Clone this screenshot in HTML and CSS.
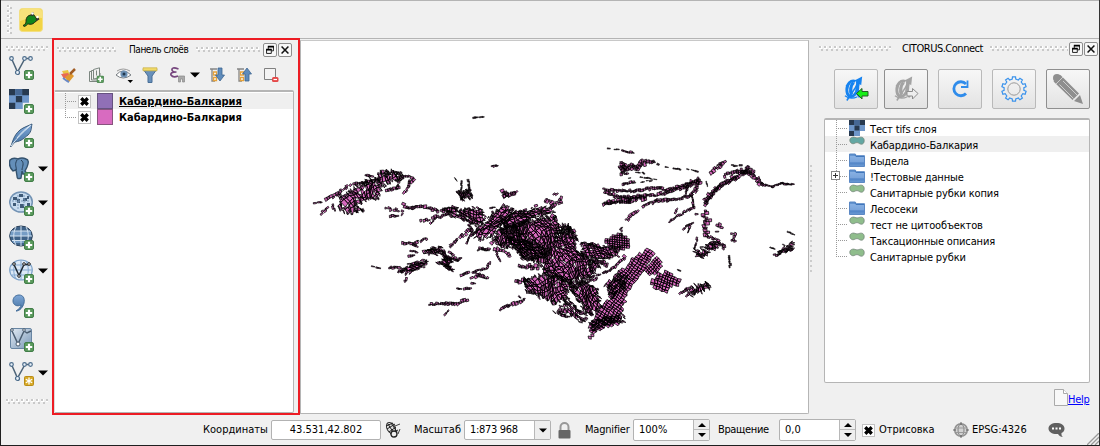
FILE: index.html
```html
<!DOCTYPE html>
<html lang="ru">
<head>
<meta charset="utf-8">
<title>QGIS</title>
<link rel="stylesheet" href="styles.css">
</head>
<body>
<svg class="defs" width="0" height="0">
  <defs>
    <linearGradient id="blue" x1="0" y1="0" x2="0" y2="1"><stop offset="0" stop-color="#7fa8d8"/><stop offset="1" stop-color="#426f9f"/></linearGradient>
    <linearGradient id="pale" x1="0" y1="0" x2="1" y2="1"><stop offset="0" stop-color="#e4edf6"/><stop offset="1" stop-color="#7795b5"/></linearGradient>
    <linearGradient id="folderfill" x1="0" y1="0" x2="0" y2="1"><stop offset="0" stop-color="#8db5e6"/><stop offset=".65" stop-color="#78a3da"/><stop offset=".7" stop-color="#4f83c6"/><stop offset="1" stop-color="#6d9bd4"/></linearGradient>
    <symbol id="plus" viewBox="0 0 10 10"><rect x=".5" y=".5" width="9" height="9" rx="1.5" fill="#5a9a5c" stroke="#417d48"/><path d="M5 1.8v6.4M1.8 5h6.4" stroke="#fff" stroke-width="2.2"/></symbol>
    <symbol id="vee" viewBox="0 0 24 24"><path d="M2.5 3.5 8.5 17 16 3.500H21" fill="none" stroke="#4d6478" stroke-width="1.5"/><g fill="#e9f1f8" stroke="#4d6d8c" stroke-width="1.200"><circle cx="2.500" cy="3.500" r="1.800"/><circle cx="15.500" cy="3.500" r="1.800"/><circle cx="21.500" cy="3.500" r="1.800"/><circle cx="8.500" cy="17.500" r="2"/></g></symbol>
    <symbol id="raster" viewBox="0 0 16 16"><path fill="#6e96c9" d="M0 0h16v11h-5v5H0z"/><path fill="#27394f" d="M0 0h5v5H0zM10.500 0H16v5h-5.500zM5.500 5.500h5v5h-5zM0 11h5v5H0z"/><path fill="#466895" d="M5 0h5.500v5H5z"/></symbol>
    <symbol id="folder" viewBox="0 0 16 14"><path d="M.5 13.500V1h5.800l1 1.700H15.500v10.800z" fill="url(#folderfill)" stroke="#5b88c4"/><path d="M1 2h5l1 1.500h8" fill="none" stroke="#3f76bb"/></symbol>
    <symbol id="poly" viewBox="0 0 16 10"><path d="M3.500 1.200C5.500.7 6.500 1.900 8 1.900S11 .9 12.700 1.200s2.600 1.600 2.500 3.600-1 3.400-2.900 3.400S9.800 6.600 8 6.600 5.500 8 3.700 7.700.8 6 .8 4.300 1.700 1.600 3.500 1.200z" fill="currentColor" stroke="#74877a" stroke-width=".8"/></symbol>
    <symbol id="cross" viewBox="0 0 12 12"><path d="M3 3l6 6M9 3l-6 6" stroke="#000" stroke-width="3"/></symbol>
    <symbol id="float" viewBox="0 0 14 14"><path d="M5 3h6v5H9M5 3v3" fill="none" stroke="#000"/><path d="M4.500 3h7M2.500 6.500h6.500" stroke="#000" stroke-width="2"/><path d="M3 6.500h5.500v4.500H3z" fill="none" stroke="#000"/></symbol>
    <symbol id="close" viewBox="0 0 14 14"><path d="M3 3l8 8M11 3l-8 8" stroke="#111" stroke-width="1.800"/></symbol>
    <symbol id="down" viewBox="0 0 10 6"><path d="M0 .5h10L5 5.500z"/></symbol>
    <symbol id="alpha" viewBox="0 0 24 26"><g fill="none" stroke="currentColor"><path d="M13 5C8 3 4 8 4 14s4 9 8 5 4-10 3-14" stroke-width="3"/><path d="M11 6c-3 3-4 9-2 13" stroke-width="3.400"/><path d="M16 6c-2 5-2 11 2 15" stroke-width="3.600"/><path d="M4 25 18 4" stroke-width="1.600"/><path d="M2 20c4 3 9 3 13 1M3 10l4-3" stroke-width="1.200"/></g><path d="M20 0 19 9 12 4z" fill="currentColor"/></symbol>
  </defs>
</svg>
<div class="window">
  <header class="topbar">
    <span class="grip-v"></span>
    <svg class="plug" width="24" height="24" viewBox="0 0 24 24"><rect x=".5" y=".5" width="23" height="23" rx="3" fill="#f2d445" stroke="#f3df81"/><path d="M1 4q0-3 3-3h16q3 0 3 3v6Q12 8 1 13z" fill="#f8e27b"/><path d="M4 17.500c2-1 3-2 3-4C7 9 9 7.500 12 7l1.500-2 5 7-3 2.500c-2 2-4 2-6 1.500-2 0-2 2-4 2.500z" fill="#12851b" stroke="#222b12"/><path d="M13 8l1-3.500M17 12l3-1.500" stroke="#333" stroke-width="2"/><circle cx="13.500" cy="5.500" r="1.300" fill="#fff"/><circle cx="18.500" cy="9" r="1.200" fill="#fff"/></svg>
  </header>
  <main class="main">
    <nav class="tools">
      <span class="grip"></span>
      <div class="tool"><svg class="ico" viewBox="0 0 25 25"><use href="#vee" width="24" height="24"/><use href="#plus" x="15" y="15" width="10" height="10"/></svg></div>
      <div class="tool"><svg class="ico" viewBox="0 0 25 25"><use href="#raster" width="20" height="20"/><use href="#plus" x="15" y="15" width="10" height="10"/></svg></div>
      <div class="tool"><svg class="ico" viewBox="0 0 25 25"><path d="M1.500 24C4 19 4 13 11 7c4-3 8-4 12-6-1 4 0 7-4 11-4 3-6 6-13 7z" fill="url(#blue)" stroke="#3c5c7c"/><path d="M2 23C7 16 13 10 21 3M8 15C12 10 16 6 22 2" fill="none" stroke="#dce9f5"/><use href="#plus" x="15" y="15" width="10" height="10"/></svg></div>
      <div class="tool"><svg class="ico" viewBox="0 0 25 25"><path d="M1 3q3-3 8-1 4-2 8 0 4 1 1 8l-2 4 2 3h-4l-1-3-1 7q-4 2-4-2l-1-6-3 1Q-1 9 1 3z" fill="#648fb9" stroke="#34526e" stroke-width="1.400"/><path d="M8 3c-3 5 0 7-1 10M12 3c4 3 1 7 1 10" fill="none" stroke="#263f58"/><use href="#plus" x="15" y="15" width="10" height="10"/></svg><svg class="arrow"><use href="#down"/></svg></div>
      <div class="tool"><svg class="ico" viewBox="0 0 25 25"><ellipse cx="12" cy="11" rx="11.300" ry="10" fill="#c8dcef" stroke="#7393b4" stroke-width="1.500"/><path d="M4 6h4v3H4zM10 3h4v3h-4zM8 8h3v4H8zM14 7h4v3h-4zM4 12h3v3H4zM11 13h4v4h-4zM18 12h3v3h-3zM18 5h2v3h-2z" fill="#3f5b78"/><path d="M9 4v14M15 4v12M3 10h18" stroke="#7a9abb" stroke-dasharray="2 1"/><use href="#plus" x="15" y="15" width="10" height="10"/></svg><svg class="arrow"><use href="#down"/></svg></div>
      <div class="tool"><svg class="ico" viewBox="0 0 25 25"><ellipse cx="12" cy="11" rx="11.300" ry="10" fill="#3e6288" stroke="#2a4059"/><path d="M2 6h20v5H1zM3 15h18v3H4z" fill="#769dc5"/><path d="M12 1v20M1 11h22M3 6h18M3 15.500h18M7 2C4 7 4 15 7 20M17 2c3 5 3 13 0 18" fill="none" stroke="#d5e4f2"/><use href="#plus" x="15" y="15" width="10" height="10"/></svg></div>
      <div class="tool"><svg class="ico" viewBox="0 0 25 25"><ellipse cx="12" cy="11" rx="11.300" ry="10" fill="#dce9f6" stroke="#7da2c9" stroke-width="1.200"/><path d="M2 6h20M1 11h22M3 16h18M12 1v20M7 2C4 7 4 15 7 20M17 2c3 5 3 13 0 18" fill="none" stroke="#83a9d0"/><path d="M5 5.500 10 16.500 15 5.500h5" fill="none" stroke="#1e2933" stroke-width="1.500"/><g fill="#fff" stroke="#222"><circle cx="5" cy="5" r="1.300"/><circle cx="15" cy="5" r="1.300"/><circle cx="20" cy="5" r="1.300"/><circle cx="10" cy="17" r="1.300"/></g><use href="#plus" x="15" y="15" width="10" height="10"/></svg><svg class="arrow"><use href="#down"/></svg></div>
      <div class="tool"><svg class="ico" viewBox="0 0 25 25"><path d="M7 18c3-2 5-4 5-6-4 2-8 0-8-4s3-6 6-6c4 0 6 3 5 8-1 4-4 8-8 8z" fill="url(#blue)" stroke="#436d9a"/><use href="#plus" x="15" y="15" width="10" height="10"/></svg></div>
      <div class="tool"><svg class="ico" viewBox="0 0 25 25"><rect x="1.500" y="1.500" width="21" height="20" rx="1.500" fill="url(#pale)" stroke="#6885a2"/><path d="M3 4 9 17l6-13 3 2 4-2" fill="none" stroke="#4a5d70" stroke-width="1.500"/><g fill="#fff" stroke="#4a5d70"><circle cx="3" cy="3" r="1.300"/><circle cx="15" cy="3" r="1.300"/><circle cx="9" cy="17" r="2"/></g><use href="#plus" x="15" y="15" width="10" height="10"/></svg></div>
      <div class="tool"><svg class="ico" viewBox="0 0 25 25"><use href="#vee" width="24" height="24"/><rect x="15.500" y="15.500" width="9" height="9" rx="1" fill="#d8aa27" stroke="#b98c18"/><path d="M20 16.500v7M16.800 18.200l6.400 3.600M23.200 18.200l-6.400 3.600" stroke="#fff" stroke-width="1.300"/></svg><svg class="arrow"><use href="#down"/></svg></div>
      <span class="grip grip-end"></span>
    </nav>

    <section class="layers">
      <div class="title"><span class="grip"></span><span class="name t-panel">Панель слоёв</span><span class="grip g2"></span><span class="tb"><svg><use href="#float"/></svg></span><span class="tb"><svg><use href="#close"/></svg></span></div>
      <div class="bar">
        <svg viewBox="0 0 16 16"><path d="M1 4l6-1 3 9-4 2z" fill="#e9c543"/><path d="M0 7l7-1 2 3-6 3z" fill="#e86a55"/><path d="M4 10l6-4 3 3-5 6z" fill="#e09a2f"/><path d="M2 11l4 3 2 1" stroke="#6988c5" stroke-width="2" fill="none"/><path d="M9 7l5-5" stroke="#a05b24" stroke-width="2.500"/></svg>
        <svg viewBox="0 0 16 16"><path d="M5.500 2.500 11.500 .8v10L5.500 12zM3.500 4.500H1.500v10H10M5.500 3.500h-2v9.500h8.500V6" fill="none" stroke="#7c8680"/><path d="M8.500 3.500v5" stroke="#7c8680"/><use href="#plus" x="8.500" y="8.500" width="7.500" height="7.500"/></svg>
        <svg class="i-eye" viewBox="0 0 18 16"><path d="M1 8q7-8 15 0-8 6-15 0z" fill="#fff" stroke="#777d82"/><circle cx="9" cy="7" r="3.600" fill="#6d91b5"/><circle cx="9" cy="7" r="1.500" fill="#22384e"/><path d="M2 4q6-4 13 0" fill="none" stroke="#999"/><path d="M12.500 13h5.500l-2.700 3z"/></svg>
        <svg class="i-filter" viewBox="0 0 16 16"><path d="M1 2h14L10 9v6.500H6V9z" fill="#6890bb" stroke="#496f97"/><path d="M1 .8h14v3H1z" fill="#f0d968" stroke="#c9ad42" stroke-width=".7"/></svg>
        <svg class="i-eps" viewBox="0 0 16 16"><path d="M8.500 2Q1.500-.5 2 3q.3 2 4.500 2Q0 5 1 8q2 3 7 1" fill="none" stroke="#75457d" stroke-width="1.700"/><path d="M8.500 15V9h6v6h-2v-3h-2v3z" fill="#aaa" stroke="#888" stroke-width=".7"/></svg>
        <svg class="arrow"><use href="#down"/></svg>
        <svg class="i-exp" viewBox="0 0 16 16"><path d="M1 2h7M3 2v12h3" fill="none" stroke="#858585" stroke-width="1.300"/><path d="M4.500 5h3v3h-3zM4.500 10.500h3v3h-3z" fill="#fff" stroke="#e6a23a" stroke-width="1.300"/><path d="M9 1h4v7h2.500l-4.500 6-4.500-6H9z" fill="#5e8bbb" stroke="#3d6691" stroke-width=".8"/></svg>
        <svg class="i-col" viewBox="0 0 16 16"><path d="M1 2h7M3 2v12h3" fill="none" stroke="#858585" stroke-width="1.300"/><path d="M4.500 5h3v3h-3zM4.500 10.500h3v3h-3z" fill="#fff" stroke="#e6a23a" stroke-width="1.300"/><path d="M9 14h4V7h2.500L11 1 6.500 7H9z" fill="#5e8bbb" stroke="#3d6691" stroke-width=".8"/></svg>
        <svg class="i-rem" viewBox="0 0 16 16"><path d="M1.500 1.500h11v11h-11z" fill="#f3f3f3" stroke="#808080"/><rect x="9" y="10" width="6.500" height="5" rx="1.500" fill="#e54848"/><path d="M10.500 12.500H14" stroke="#fff" stroke-width="1.200"/></svg>
      </div>
      <div class="layerlist">
        <div class="layer selected"><span class="branch"></span><span class="check"><svg><use href="#cross"/></svg></span><span class="swatch violet"></span><b><u>Кабардино-Балкария</u></b></div>
        <div class="layer"><span class="branch last"></span><span class="check"><svg><use href="#cross"/></svg></span><span class="swatch pink"></span><b>Кабардино-Балкария</b></div>
      </div>
    </section>

    <section class="canvas"><svg id="map" width="507" height="372" viewBox="301 41 507 372"></svg></section>

    <aside class="connect">
      <span class="splitter"></span>
      <div class="title"><span class="grip"></span><span class="name t-conn">CITORUS.Connect</span><span class="grip g2"></span><span class="tb"><svg><use href="#float"/></svg></span><span class="tb"><svg><use href="#close"/></svg></span></div>
      <div class="buttons">
        <span class="btn"><svg width="26" height="26" viewBox="0 0 26 26"><use href="#alpha" width="23" height="26" color="#1683f0"/><path d="M13.500 17.500 19 12.500v3h6v4.500h-6v3z" fill="#16ee16" stroke="#245c24"/></svg></span>
        <span class="btn dark"><svg width="26" height="26" viewBox="0 0 26 26"><use href="#alpha" width="23" height="26" color="#a3a3a3"/><path d="M25 17.500 19.500 12.500v3H14v4.500h5.500v3z" fill="#eee" stroke="#8d8d8d"/></svg></span>
        <span class="btn gap"><svg width="26" height="26" viewBox="0 0 26 26"><path d="M19 8A7 7 0 1 0 19 17.500" fill="none" stroke="#2f8ceb" stroke-width="2.800"/><path d="M20.500 4.500v6.500h-6.500" fill="none" stroke="#2f8ceb" stroke-width="1.800"/></svg></span>
        <span class="btn gap"><svg width="26" height="26" viewBox="0 0 26 26" id="gear"><circle cx="13" cy="13" r="6.200" fill="none" stroke="#999"/></svg></span>
        <span class="btn gap dark"><svg width="32" height="32" viewBox="0 0 32 32"><path d="M1.500 8.500 8.500 2 27 20.500l-6.500 6.500zM22 28l6-6 3 9z" fill="#8f8f8f"/><circle cx="5" cy="5" r="4" fill="#8f8f8f"/><path d="M4 11l7-7M7.500 11.500l14 14M11 8l14 14" stroke="#ddd" stroke-width=".8"/></svg></span>
      </div>
      <div class="tree">
        <div class="row"><span class="branch"></span><svg class="ri"><use href="#raster"/></svg><span>Тест tifs слоя</span></div>
        <div class="row selected"><span class="branch"></span><svg class="pi teal"><use href="#poly"/></svg><span>Кабардино-Балкария</span></div>
        <div class="row"><span class="branch"></span><svg class="fi"><use href="#folder"/></svg><span>Выдела</span></div>
        <div class="row"><span class="branch"><i class="expander"></i></span><svg class="fi"><use href="#folder"/></svg><span>!Тестовые данные</span></div>
        <div class="row"><span class="branch"></span><svg class="pi"><use href="#poly"/></svg><span>Санитарные рубки копия</span></div>
        <div class="row"><span class="branch"></span><svg class="fi"><use href="#folder"/></svg><span>Лесосеки</span></div>
        <div class="row"><span class="branch"></span><svg class="pi"><use href="#poly"/></svg><span>тест не цитообъектов</span></div>
        <div class="row"><span class="branch"></span><svg class="pi"><use href="#poly"/></svg><span>Таксационные описания</span></div>
        <div class="row"><span class="branch last"></span><svg class="pi"><use href="#poly"/></svg><span>Санитарные рубки</span></div>
      </div>
      <div class="help"><svg width="14" height="17" viewBox="0 0 14 17"><path d="M.5.500h9l4 4v12H.5z" fill="#f8f8f8" stroke="#aaa"/><path d="M9.500.500v4h4" fill="#fff" stroke="#aaa"/></svg><a>Help</a></div>
    </aside>
  </main>

  <footer class="status">
    <span class="s-coord">Координаты</span>
    <span class="field f-coord">43.531,42.802</span>
    <svg class="mouse" width="16" height="18" viewBox="0 0 16 18"><ellipse cx="6" cy="7" rx="4" ry="6" fill="#ddd" stroke="#333" transform="rotate(-30 6 7)"/><path d="M1 5l7-3M2 8l8-5M4 11l7-5M5 13l8-4M3 3l7 11M6 2l6 9" stroke="#222"/><circle cx="9" cy="13" r="3" fill="#eee" stroke="#222" stroke-width="1.300"/><path d="M10 5l5-2M13 13l2-5" stroke="#444"/></svg>
    <span class="s-scale">Масштаб</span>
    <span class="field f-scale"><span>1:873 968</span><i><svg class="arrow"><use href="#down"/></svg></i></span>
    <svg class="lock" width="13" height="17" viewBox="0 0 13 17"><path d="M2.500 8V5a4 4 0 0 1 8 0v3" fill="none" stroke="#999" stroke-width="2"/><rect x=".5" y="8" width="12" height="8.500" rx="1" fill="#666"/></svg>
    <span class="s-mag">Magnifier</span>
    <span class="field spin f-mag"><span>100%</span><i><svg viewBox="0 0 8 4"><path d="M0 4h8L4 0z"/></svg><svg viewBox="0 0 8 4"><path d="M0 0h8L4 4z"/></svg></i></span>
    <span class="s-rot">Вращение</span>
    <span class="field spin f-rot"><span>0,0</span><i><svg viewBox="0 0 8 4"><path d="M0 4h8L4 0z"/></svg><svg viewBox="0 0 8 4"><path d="M0 0h8L4 4z"/></svg></i></span>
    <span class="check s-check"><svg><use href="#cross"/></svg></span>
    <span class="s-render">Отрисовка</span>
    <svg class="crs" width="16" height="16" viewBox="0 0 16 16"><circle cx="8" cy="8" r="6.300" fill="#d2d2d2" stroke="#909090" stroke-width="1.500"/><ellipse cx="8" cy="8" rx="3" ry="6" fill="none" stroke="#858585"/><path d="M8 0v3M8 13v3M0 8h3M13 8h3" stroke="#666"/><path d="M3 6h10M3 10.500h10" stroke="#999"/></svg>
    <span class="s-epsg">EPSG:4326</span>
    <svg class="bubble" width="17" height="16" viewBox="0 0 17 16"><path d="M8.500 1C4 1 .5 3 .5 6.500S4 12 8.500 12h1.500c1 2 3 3 5 3-1.500-1-1.700-2.500-1.500-4 2-1 3-2.500 3-4.500C16.500 3 13 1 8.500 1z" fill="#606060"/><path d="M4 5.500h2v2H4zM7.500 5.500h2v2h-2zM11 5.500h2v2h-2z" fill="#fff"/></svg>
    <svg class="sizer" width="12" height="12" viewBox="0 0 12 12"><path d="M0 12 12 0M4 12l8-8M8 12l4-4" stroke="#999" stroke-width="1.300"/></svg>
  </footer>
</div>
<script src="map.js"></script>
</body>
</html>
```
FILE: styles.css
```css
* { box-sizing: border-box; }
body { margin: 0; background: #f0f0f0; color: #000; font: 11px/16px "DejaVu Sans Condensed", "DejaVu Sans", sans-serif; }
svg { display: block; flex: none; }
.defs { position: absolute; }
.window { width: 1100px; height: 446px; display: grid; grid-template-rows: 38px 377px 30px; background: #f0f0f0; border-left: 1px solid #1f1f1f; border-right: 1px solid #333; border-bottom: 1px solid #1f1f1f; overflow: hidden; white-space: nowrap; }
.topbar { display: flex; border-top: 1px solid #b4b4b4; padding: 4px 0 0 6px; }
.plug { margin: 3px 0 0 6px; }
.grip { height: 6px; background: conic-gradient(from 0deg at 2px 2px, transparent 75%, #c9c9c9 0) 0 0 / 5px 6px, conic-gradient(from 0deg at 2px 2px, transparent 75%, #c9c9c9 0) 2px 3px / 5px 6px, conic-gradient(from 0deg at 3px 3px, transparent 75%, #fff 0) 0 0 / 5px 6px; }
.grip-v { width: 6px; height: 30px; background: conic-gradient(from 0deg at 2px 2px, transparent 75%, #c9c9c9 0) 0 0 / 6px 5px, conic-gradient(from 0deg at 2px 2px, transparent 75%, #c9c9c9 0) 3px 2px / 6px 5px, conic-gradient(from 0deg at 3px 3px, transparent 75%, #fff 0) 0 0 / 6px 5px; }
.main { display: grid; grid-template-columns: 51px 248px 509px 290px; border-top: 1px solid #b4b4b4; }

.tools { display: flex; flex-direction: column; padding: 7px 4px 0 5px; }
.tools .grip { margin-bottom: -1px; height: 5px; flex: none; }
.tools .grip-end { margin-top: 9px; }
.tool { display: flex; align-items: center; flex: none; height: 34px; padding-left: 3px; gap: 4px; }
.ico { width: 25px; height: 25px; }
.arrow { width: 10px; height: 6px; }

.layers { border: 2px solid #ed1c24; margin-top: -1px; padding: 1px 4px 0 0; display: flex; flex-direction: column; }
.title { display: flex; align-items: center; height: 18px; }
.title .grip { flex: none; width: 60px; margin-left: 3px; }
.title .name { flex: none; width: 61px; margin-left: 12px; }
.title .g2 { width: 65px; margin-left: 6px; }
.title .t-panel { font-size: 10px; letter-spacing: -.45px; }
.title .t-conn { letter-spacing: -.48px; }
.tb { flex: none; width: 14px; height: 14px; margin-left: 1px; border: 1px solid #8e8e8e; border-radius: 2px; background: #f7f7f7; }
.g2 + .tb { margin-left: 2px; }
.tb svg { width: 12px; height: 12px; }
.bar { display: flex; align-items: center; height: 31px; padding-left: 7px; }
.bar svg { width: 16px; height: 16px; margin-right: 11px; }
.bar .i-eye { width: 18px; margin-right: 9px; }
.bar .i-filter { margin-right: 12px; }
.bar .i-eps { margin-right: 4px; }
.bar .arrow { width: 10px; height: 6px; margin-right: 9px; }
.layerlist { flex: 1; border: 1px solid #b5b5b5; border-top-width: 2px; border-left-color: #ddd; border-radius: 2px; background: #fff; padding-top: 1px; }
.layer { display: flex; align-items: center; height: 16px; padding-left: 10px; }
.selected { background: #efefef; }
.branch { position: relative; flex: none; width: 11px; height: 16px; background: repeating-linear-gradient(#999 0 1px, transparent 1px 2px) 0 0 / 1px 16px no-repeat, repeating-linear-gradient(90deg, #999 0 1px, transparent 1px 2px) 0 8px / 11px 1px no-repeat; }
.branch.last { background-size: 1px 8px, 11px 1px; }
.check { width: 13px; height: 13px; border: 1px solid #c3c3c3; background: #fff; flex: none; }
.check svg { width: 13px; height: 13px; margin: -1px; }
.layer .check { margin-left: 2px; }
.swatch { width: 16px; height: 16px; margin: 0 6px; border: 1px solid; }
.violet { background: #9070b6; border-color: #665380; }
.pink { background: #d86bc0; border-color: #88547e; }
.layer b { letter-spacing: -.03px; padding-top: 1px; }
.layer u { text-underline-offset: 1px; }

.canvas { background: #fff; border: 1px solid #b5b5b5; border-top-color: #c8c8c8; border-radius: 0 0 2px 0; margin-top: 1px; margin-bottom: 1px; overflow: hidden; }

.connect { position: relative; display: flex; flex-direction: column; padding-top: 1px; }
.splitter { position: absolute; left: 1px; top: 126px; width: 2px; height: 108px; background: repeating-linear-gradient(#ccc 0 2px, transparent 2px 5px); }
.connect .title { padding-left: 7px; }
.connect .title .grip { width: 72px; }
.connect .title .t-conn { width: 82px; margin-left: 11px; }
.connect .title .g2 { width: 78px; margin-left: 6px; }
.connect .title .g2 + .tb { margin-left: 1px; }
.buttons { display: flex; padding: 11px 0 9px 25px; }
.btn { width: 44px; height: 40px; margin-right: 6px; display: flex; align-items: center; justify-content: center; border: 1px solid #b9b9b9; border-radius: 2px; background: linear-gradient(#f7f7f7, #e3e3e3); }
.btn.dark { border-color: #8f8f8f; }
.btn.gap { margin: 0 6px 0 4px; }
.tree { width: 266px; height: 265px; margin-left: 15px; border: 1px solid #b5b5b5; border-top-width: 2px; border-radius: 2px; background: #fff; }
.row { display: flex; align-items: center; height: 16px; padding-left: 11px; letter-spacing: -.15px; }
.row svg { width: 16px; margin: 0 5px 0 2px; }
.row .ri { height: 16px; }
.row .fi { height: 14px; }
.row .pi { height: 10px; color: #8fbd8c; align-self: flex-start; }
.row .pi.teal { color: #63a7a3; }
.row span:last-child { padding-top: 3px; }
.expander { position: absolute; left: -5px; top: 3px; width: 9px; height: 9px; border: 1px solid #888; background: linear-gradient(#333, #333) 1px 3px / 5px 1px no-repeat, linear-gradient(#333, #333) 3px 1px / 1px 5px no-repeat, #fff; }
.help { display: flex; padding: 6px 0 0 245px; }
.help a { color: #00f; text-decoration: underline; padding-top: 3px; letter-spacing: -.3px; }

.status { display: flex; align-items: center; padding-left: 202px; }
.status > span { flex: none; }
.field { display: flex; height: 20px; align-items: center; border: 1px solid #b2b2b2; border-radius: 2px; background: #fff; padding-left: 5px; }
.s-coord { width: 68px; }
.f-coord { width: 110px; justify-content: center; padding: 0; }
.mouse { margin: 0 13px 0 4px; }
.s-scale { width: 50px; }
.f-scale { width: 87px; justify-content: space-between; }
.f-scale > span { letter-spacing: -.3px; }
.field i { display: flex; width: 16px; height: 100%; align-items: center; justify-content: center; border-left: 1px solid #b8b8b8; background: #eee; }
.f-scale i .arrow { width: 8px; height: 5px; }
.lock { margin: 0 14px 0 7px; }
.s-mag { width: 48px; letter-spacing: -.2px; }
.spin { width: 77px; height: 22px; justify-content: space-between; }
.spin i { flex-direction: column; gap: 6px; background: linear-gradient(#eee 9px, #bbb 9px 10px, #eee 10px); }
.spin i svg { width: 8px; height: 4px; }
.s-rot { width: 61px; margin-left: 8px; letter-spacing: -.35px; }
.s-check { margin: 0 4px 0 6px; }
.s-render { width: 74px; }
.s-epsg { width: 76px; margin-left: 3px; }
.sizer { margin: 17px 0 0 22px; }
```
FILE: map.js
```js
// Forest compartments: areas are split into small irregular parcels.
let seed = 7;
const rnd = () => (seed = (seed * 16807) % 2147483647) / 2147483647;
const fills = { p: '', k: '' };

const W = [300, 150], C = [440, 190], E = [590, 140];
const pts = (o, s) => s.split(' ').map(p => p.split(',').map(Number)).map(([x, y]) => [o[0] + x / 3, o[1] + y / 3]);
const add = (k, q) => { fills[k] += 'M' + q.map(p => p[0].toFixed(1) + ' ' + p[1].toFixed(1)).join('L') + 'z'; };

function inside(x, y, q) {
  let r = false;
  for (let i = 0, j = q.length - 1; i < q.length; j = i++) {
    const [a, b] = q[i], [c, d] = q[j];
    if ((b > y) !== (d > y) && x < (c - a) * (y - b) / (d - b) + a) r = !r;
  }
  return r;
}

function area(o, s, deg = 30, cw = 3.6, ch = 2.6, jit = 0.9, keep = 0.98, kind = 'p') {
  const q = pts(o, s), a = deg * Math.PI / 180, co = Math.cos(a), si = Math.sin(a);
  const cx = q.reduce((t, p) => t + p[0], 0) / q.length, cy = q.reduce((t, p) => t + p[1], 0) / q.length;
  const n = 46, g = [], bend = jit > .6 ? 2.4 : .5;
  for (let i = -n; i <= n; i++) {
    g[i + n] = [];
    for (let j = -n; j <= n; j++) {
      let u = (i + (rnd() - .5) * jit) * cw, v = (j + (rnd() - .5) * jit) * ch;
      const u0 = u;
      u += bend * Math.sin(v / 5 + u / 19);
      v += bend * Math.sin(u0 / 7 - v / 13);
      g[i + n][j + n] = [cx + u * co - v * si, cy + u * si + v * co];
    }
  }
  for (let i = 0; i < 2 * n; i++) for (let j = 0; j < 2 * n; j++) {
    const c = [g[i][j], g[i + 1][j], g[i + 1][j + 1], g[i][j + 1]];
    const mx = (c[0][0] + c[2][0]) / 2, my = (c[0][1] + c[2][1]) / 2;
    if (inside(mx, my, q) && rnd() < keep) add(kind, c);
  }
  // loose slivers scattered along the boundary
  if (jit > .6) for (let i = 0; i < q.length; i++) {
    const [x0, y0] = q[i], [x1, y1] = q[(i + 1) % q.length], L = Math.hypot(x1 - x0, y1 - y0);
    for (let t = 0; t < L; t += 2.4) {
      const x = x0 + (x1 - x0) * t / L + (rnd() - .5) * 3.5, y = y0 + (y1 - y0) * t / L + (rnd() - .5) * 3.5;
      const b = a + (rnd() - .5), l = .8 + rnd() * 1.8, h = .3 + rnd() * .6, ux = Math.cos(b), uy = Math.sin(b);
      add(kind, [[x - ux * l, y - uy * l], [x - uy * h, y + ux * h], [x + ux * l, y + uy * l], [x + uy * h, y - ux * h]]);
    }
  }
}

function strip(o, s, w = 2, keep = 0.9, kind = 'p') {
  const q = pts(o, s);
  for (let i = 1; i < q.length; i++) {
    const [x0, y0] = q[i - 1], [x1, y1] = q[i], L = Math.hypot(x1 - x0, y1 - y0) || 1;
    const dx = (x1 - x0) / L, dy = (y1 - y0) / L;
    for (let t = 0; t < L;) {
      const l = 1.1 + rnd() * 1.8, h = w * (.22 + rnd() * .45), k = (rnd() - .5) * w * .8;
      if (rnd() < keep) {
        const x = x0 + dx * t - dy * k, y = y0 + dy * t + dx * k, e = l + .7, m = h * (.3 + rnd() * .7);
        add(kind, [[x - dy * h, y + dx * h], [x + dx * e - dy * m, y + dy * e + dx * m], [x + dx * e + dy * m, y + dy * e - dx * m], [x + dy * h * .8, y - dx * h * .8]]);
      }
      t += l;
    }
  }
}

// western group
area(W, '120,145 155,125 195,95 235,90 240,70 265,65 300,68 305,85 280,95 240,110 230,145 190,148 170,165 190,180 150,188 120,178', 60, 3.4, 2.8, .9, .9);
strip(W, '75,150 110,135 150,102 190,100 240,90', 3);
strip(W, '240,68 300,75 342,85 335,95', 3);
strip(W, '250,122 290,115 300,90', 3);
strip(W, '330,90 325,115 312,130', 2, .7);
strip(W, '40,160 62,158', 1.5, .7); strip(W, '60,192 80,178', 2.5); strip(W, '98,162 103,182', 2);
strip(W, '195,76 216,80', 2);
strip(W, '255,174 285,178 308,185 300,198', 3, .85);
strip(W, '305,162 325,172 375,170 410,182 440,182', 3);
strip(W, '268,198 290,196', 2, .7);
strip(W, '360,214 395,205 440,195 455,180', 3);
strip(W, '390,222 405,208', 1.7);
area(W, '435,175 460,170 480,182 510,175 545,180 552,210 540,225 510,220 490,205 455,198', 15, 2.7, 2.3);
area(W, '475,125 510,122 516,140 482,148', 60, 1.9, 1.6, .8, .8);
strip(W, '485,92 483,125', 1.5, .8, 'k'); strip(W, '505,88 507,122', 2, .9, 'k'); strip(W, '463,83 468,90', 1, .6, 'k');
strip(W, '442,293 465,275 485,258 510,240', 3, .85);
strip(W, '500,282 515,245 510,230', 2);
strip(W, '305,280 340,280 378,267', 2.6, .85); strip(W, '330,300 350,305', 2); strip(W, '315,320 340,318', 2);
strip(W, '340,282 350,288', 2);
area(W, '372,306 400,292 426,295 424,308 392,311', 0, 2.8, 2.1);
strip(W, '430,300 435,318 470,330 480,328', 3, .8); strip(W, '445,305 460,312', 2);
area(W, '415,338 440,328 468,328 446,345 453,358 435,350', 20, 2.8, 2.3);
strip(W, '214,350 238,355', 1.6, .75); strip(W, '266,354 295,350', 2);
area(W, '298,362 325,347 350,337 382,333 370,350 335,363', 150, 3.6, 2.6);
strip(W, '320,365 317,392', 2);
strip(W, '480,374 520,365 560,355 568,335', 2.3, .85); strip(W, '505,396 525,400', 1.8); strip(W, '510,384 535,375 560,385', 3, .75);
strip(W, '470,414 490,417 515,413', 2); strip(W, '386,463 455,461', 2.4, 1); strip(W, '455,466 475,458 502,451', 3.2, 1);
strip(W, '428,500 443,482', 1.8); strip(W, '536,295 562,297', 2, .7);
strip(W, '574,50 592,46', 1.8); strip([300, 40], '518,234 548,230', 1.3, .8, 'k');

// central massif
area(C, '100,128 140,98 165,65 190,52 218,60 205,90 178,105 155,138 120,147', 130, 3.2, 2.5);
area(C, '182,92 230,66 280,58 335,52 338,66 285,78 250,100 205,112', 160, 3.2, 2.3);
strip(C, '145,54 165,53', 1.5);
area(C, '160,145 200,108 265,95 345,76 358,108 385,108 412,145 400,175 430,195 475,228 450,258 390,278 350,262 318,255 305,222 250,205 225,170 180,168', 62, 3.4, 2.1, 1, .95);
area(C, '180,118 225,110 260,150 300,165 320,200 250,205 225,172', 30, 3.2, 1.9, 1, .8);
area(C, '252,272 300,258 350,258 400,280 380,300 382,325 345,340 300,318 262,305', 70, 3.6, 2.4, .9);
area(C, '392,300 430,275 470,300 482,350 450,378 420,335', 50, 3.2, 2.3);
area(C, '348,368 388,330 405,350 425,365 440,385 425,392 390,370 360,372', 30, 2.9, 2.3, .9, .8);
strip(C, '360,376 388,380', 2); strip(C, '225,270 265,275', 4, .85); strip(C, '235,225 290,232', 4, .85);
strip(C, '160,178 190,185 207,200', 4.5, .9); strip(C, '168,185 178,208', 1.5);
strip(C, '345,150 365,118 395,120 405,145', 5, .95); strip(C, '250,60 290,48', 3, .7); strip(C, '150,160 170,140', 3);
area(C, '428,158 455,160 482,170 535,176 530,197 470,208 430,195', 0, 2.8, 2.5);
area(C, '490,152 515,138 545,130 568,150 568,172 530,182 505,170', 4, 2.4, 2.4, .25, 1);
strip(C, '543,120 545,135', 1.5); strip(C, '448,210 500,222', 5, .8);
strip(C, '395,290 440,268 490,250 520,235', 2, .85); strip(C, '520,235 555,200', 3, 1);
strip(C, '400,300 430,280 470,265', 1.8, .7);
area(E, '55,425 80,405 120,365 150,340 182,325 195,342 175,370 150,405 115,460 95,510 90,550 45,560 0,585 5,540 30,500 60,475', 35, 3.3, 2.5, .5, 1);
area(E, '50,440 85,405 110,410 100,450 65,470', 100, 3, 2.4, .9, .8);
area(C, '450,400 500,385 548,375 548,390 500,402 460,418', 20, 2.8, 2.2);
area(E, '160,388 198,352 214,365 208,392 180,412', 45, 2.8, 2.4, .4, 1);
area(E, '182,430 205,402 240,392 250,408 275,422 268,438 240,440 228,462 195,445', 20, 3, 2.7, .5, 1);
area(E, '298,450 320,438 355,430 358,446 320,456 300,463', 60, 3, 2.7);
strip(E, '268,463 285,450 300,440', 2, .8); strip(E, '286,468 300,458', 2);
area(C, '447,438 455,433 461,442 450,446', 0, 2.5, 2.5, .4);
strip(C, '178,360 200,348 230,336 252,328', 3.2, .95); strip(C, '235,318 240,322', 1.5);
strip(C, '182,0 190,18 222,14 228,10', 4.5, 1); strip(C, '198,3 205,15', 3);
strip(C, '316,28 340,44 360,38 364,24', 4, 1); strip(C, '335,18 346,12', 2, .7);
strip(C, '5,180 20,200 5,218 35,240', 2.5, .7); strip(C, '130,172 118,178 140,180', 1.3, .8, 'k');

// eastern valleys
strip(E, '45,25 80,28', 1.4, .7, 'k'); strip(E, '95,30 125,38', 1.8);
strip(E, '92,65 95,90 120,75 145,85 155,68 188,62', 4.5, 1); strip(E, '100,70 105,90 150,75', 3, .9); strip(E, '90,99 110,98', 3); strip(E, '130,95 165,100', 1.2, .6, 'k');
strip(E, '188,66 215,78', 2, .7, 'k'); strip(E, '225,80 270,88', 1.2, .5, 'k'); strip(E, '290,86 325,97', 1.3, .6, 'k');
strip(E, '82,132 110,130 130,125', 2, .8); strip(E, '105,115 150,110 205,120', 1.2, .4, 'k'); strip(E, '120,130 180,122', 1.2, .4, 'k');
strip(E, '38,148 110,154 205,143 230,150 300,132 325,120', 2.7, 1);
strip(E, '42,155 90,172 160,170 230,158 300,135', 3, 1); strip(E, '38,195 90,180 165,172', 4, 1); strip(E, '42,190 120,186', 3, 1);
strip(E, '157,202 195,183 250,180 300,165 318,150 325,115', 3, 1); strip(E, '290,128 290,160', 2.5); strip(E, '300,125 330,128', 4);
strip(E, '305,165 312,200 240,243', 2, .95); strip(E, '280,271 292,255 305,250 295,273', 2); strip(E, '253,220 262,208', 3);
strip(E, '108,242 122,228 142,212', 3, .95); strip(E, '90,270 95,263', 1.4);
strip(E, '358,98 380,85 400,72', 4, .9); strip(E, '380,75 405,65', 2); strip(E, '418,76 460,78', 1.5, .6, 'k');
strip(E, '340,196 360,165 375,148 410,125 470,92', 4.4, 1); strip(E, '345,190 380,145 440,110', 3, 1); strip(E, '400,106 440,98 480,85', 4, 1);
strip(E, '470,90 500,115 515,133', 4.4, 1); strip(E, '450,92 490,98', 4, 1); strip(E, '510,130 545,140 572,130 605,133', 1.6, 1);
strip(E, '348,112 350,132', 1.3, .8, 'k');
strip(E, '345,210 345,245 348,280', 4.5, 1); strip(E, '347,285 370,295 400,315 403,325', 2.8, 1);
area(E, '317,330 345,325 365,307 385,310 383,323 360,333 335,352 320,343', 20, 2.7, 2.3); strip(E, '323,292 312,330', 1.7);
for (const [p, r] of [['378,255 392,258', 4], ['376,275 384,275', 2], ['422,285 436,285', 4], ['423,301 433,301', 2], ['315,224 321,224', 2], ['356,242 362,242', 3]]) strip(E, p, r, 1);
strip(E, '415,340 420,376', 2, .9, 'k'); strip(E, '540,320 552,326', 1.4, .9, 'k'); strip(E, '592,274 607,282', 1.4, .7, 'k');
strip(E, '550,346 570,344', 2); area(E, '567,338 580,327 606,311 611,325 590,335', 150, 2.8, 2.4);
strip(E, '578,312 600,325', 1.3, .9, 'k'); strip(E, '262,388 267,390', 1.2, 1, 'k');

document.getElementById('map').innerHTML =
  `<path d="${fills.p}" fill="#d869bf" stroke="#000" stroke-width=".75"/><path d="${fills.k}" fill="#3a2735" stroke="#000" stroke-width=".5"/>`;

// toothed outline of the settings gear
let d = '';
for (let i = 0; i < 10; i++) {
  for (const [off, r] of [[-.28, 10], [-.2, 12.3], [.2, 12.3], [.28, 10]]) {
    const a = (i + off) * Math.PI / 5;
    d += (d ? 'L' : 'M') + (13 + r * Math.sin(a)).toFixed(2) + ' ' + (13 - r * Math.cos(a)).toFixed(2);
  }
}
document.getElementById('gear').insertAdjacentHTML('beforeend', `<path d="${d}z" fill="none" stroke="#3b93ec" stroke-width="1.200"/>`);
```
